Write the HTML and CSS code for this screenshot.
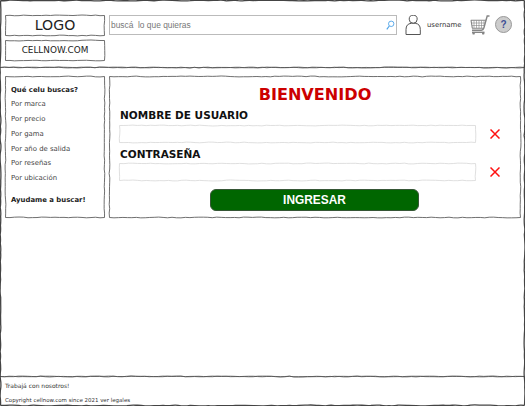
FILE: index.html
```html
<!DOCTYPE html>
<html lang="es">
<head>
<meta charset="utf-8">
<title>CELLNOW.COM</title>
<link rel="stylesheet" href="styles.css">
</head>
<body>
<div class="page sketch heavy">
  <header class="header">
    <div class="brand">
      <div class="logo sketch">LOGO</div>
      <div class="domain sketch">CELLNOW.COM</div>
    </div>
    <div class="search">
      <span>buscá&nbsp; lo que quieras</span>
      <svg width="9" height="11" viewBox="0 0 9 11" fill="none" stroke="#4da3e8"><circle cx="5.2" cy="3.8" r="2.7" stroke-width=".9"/><path d="M3.3 6 .8 9.3" stroke-width="1.2"/></svg>
    </div>
    <svg class="user" width="18" height="22" viewBox="0 0 18 22" fill="#fff" stroke="#555" stroke-width="1"><path d="M1 19.5V14.5Q1 8.8 6.3 8.3H10.2Q15.3 8.8 15.3 14.5V19.5Z"/><circle cx="8.2" cy="4.2" r="4"/></svg>
    <span class="username">username</span>
    <svg class="cart" width="21" height="21" viewBox="0 0 21 21" fill="none" stroke="#858585"><path d="M19.5 1H17.2L13.8 13.2Q13.3 15.2 11.3 15.2H2" stroke-width="1.4"/><path d="M.8 5.2H16M2 13.2H13.8M1 5.2 2.3 13.2" stroke-width="1.1"/><path d="M1.5 8H15M2 10.5H14M4 5.5V13M6.5 5.5V13M9 5.5V13M11.5 5.5V13M14 5.5V11" stroke-width=".6"/><path d="M2 17.3H14.5" stroke-width="1.4"/><circle cx="3.6" cy="18.4" r="1.2" fill="#858585" stroke="none"/><circle cx="13.2" cy="18.4" r="1.2" fill="#858585" stroke="none"/></svg>
    <span class="help">?</span>
  </header>
  <div class="rule sketch-line"></div>
  <div class="content">
    <nav class="sidebar sketch">
      <b>Qué celu buscas?</b>
      <span>Por marca</span>
      <span>Por precio</span>
      <span>Por gama</span>
      <span>Por año de salida</span>
      <span>Por reseñas</span>
      <span>Por ubicación</span>
      <b class="assist">Ayudame a buscar!</b>
    </nav>
    <main class="login sketch">
      <h1>BIENVENIDO</h1>
      <label>NOMBRE DE USUARIO</label>
      <div class="field"><div class="input sketch light"></div><svg class="cross" width="10" height="10" viewBox="0 0 10 10"><path d="M.5.5 9.5 9.5M9.5.5.5 9.5" stroke="#f11" stroke-width="1.5"/></svg></div>
      <label class="second">CONTRASEÑA</label>
      <div class="field"><div class="input sketch light"></div><svg class="cross" width="10" height="10" viewBox="0 0 10 10"><path d="M.5.5 9.5 9.5M9.5.5.5 9.5" stroke="#f11" stroke-width="1.5"/></svg></div>
      <div class="submit">INGRESAR</div>
    </main>
  </div>
  <footer class="footer">
    <div class="sketch-line"></div>
    <span class="jobs">Trabajá con nosotros!</span>
    <span class="legal">Copyright cellnow.com since 2021 ver legales</span>
  </footer>
</div>
<script src="sketch.js"></script>
</body>
</html>
```
FILE: styles.css
```css
* { box-sizing: border-box; }
body { margin: 0; background: #fff; color: #222; font-family: "DejaVu Sans", sans-serif; }
.page { width: 525px; height: 406px; display: flex; flex-direction: column; overflow: hidden; }
.sketch, .sketch-line { position: relative; }
.outline { position: absolute; left: 0; top: 0; overflow: visible; pointer-events: none; fill: none; stroke: #555; stroke-width: .85; }
.light > .outline { stroke: #d9d9d9; }
.heavy > .outline { stroke: #444; stroke-width: 1.3; }
.header { height: 67px; flex: none; display: flex; align-items: flex-start; padding: 15px 0 0 5px; }
.brand { display: flex; flex-direction: column; gap: 4px; width: 100px; }
.logo, .domain { height: 20.5px; display: flex; align-items: center; justify-content: center; }
.logo { font-size: 14.1px; padding-bottom: 1px; }
.domain { font-size: 8.9px; }
.search { margin-left: 4px; width: 288px; height: 20px; border: 1px solid #bbb; display: flex; align-items: center; justify-content: space-between; padding: 0 1px; font: 8.4px "Liberation Sans", sans-serif; color: #777; }
.user { margin-left: 8px; }
.username { margin: 5px 0 0 4px; width: 43px; font-size: 6.9px; line-height: 10px; color: #333; }
.cart { flex: none; }
.help { width: 17px; height: 17px; margin: 1px 0 0 4px; border: 1px solid #999; border-radius: 50%; background: #ccc; color: #3c4e94; font: bold 10px/15px "Liberation Sans", sans-serif; text-align: center; }
.rule { height: 1px; flex: none; }
.content { display: flex; gap: 4px; padding: 8px 4px 0 5px; }
.sidebar { width: 100px; height: 142px; padding: 6.5px 6px; display: flex; flex-direction: column; font-size: 6.9px; line-height: 14.8px; color: #444; white-space: nowrap; }
.sidebar b { color: #222; }
.sidebar .assist { margin-top: 7px; }
.login { width: 412px; height: 142px; padding: 9px 10px 0; display: flex; flex-direction: column; }
h1 { margin: 0; font-size: 16.1px; line-height: 20px; color: #c00; text-align: center; }
label { margin: 3px 0 0 1px; height: 17px; font-size: 10.5px; line-height: 15px; font-weight: bold; color: #111; }
.second { margin-top: 4px; height: 16px; }
.field { display: flex; align-items: center; }
.input { width: 357px; height: 18px; }
.cross { margin-left: 14px; }
.submit { width: 209px; height: 22px; margin: 8px 0 0 91px; border: 1px solid #365636; border-radius: 6px; background: #060; color: #fff; font: bold 11.9px/20px "Liberation Sans", sans-serif; text-align: center; }
.footer { margin-top: auto; height: 30px; display: flex; flex-direction: column; font-size: 6px; line-height: 10px; color: #333; }
.footer span { margin-left: 5px; white-space: nowrap; }
.jobs { margin-top: 5px; }
.footer .legal { margin-top: 4px; font-size: 5.46px; }
```
FILE: sketch.js
```js
// Draws hand-drawn looking outlines around boxes and along rules.
let seed = 7;
const rnd = () => { seed = (seed * 16807) % 2147483647; return seed / 2147483647 - 0.5; };

function stroke(x1, y1, x2, y2) {
  const len = Math.hypot(x2 - x1, y2 - y1);
  const n = Math.max(2, Math.round(len / 9));
  let d = `M${x1} ${y1}`;
  for (let i = 1; i <= n; i++) {
    const t = i / n, m = (i - 0.5) / n;
    const a = i === n ? 0 : rnd() * 0.8, b = rnd() * 1.5;
    const h = y1 === y2;
    const at = (k, o) => `${x1 + (x2 - x1) * k + (h ? 0 : o)} ${y1 + (y2 - y1) * k + (h ? o : 0)}`;
    d += `Q${at(m, b)} ${at(t, a)}`;
  }
  return d;
}

document.querySelectorAll('.sketch, .sketch-line').forEach(el => {
  const w = el.offsetWidth - 0.5, h = el.offsetHeight - 0.5;
  const svg = document.createElementNS('http://www.w3.org/2000/svg', 'svg');
  const path = document.createElementNS('http://www.w3.org/2000/svg', 'path');
  svg.setAttribute('class', 'outline');
  svg.setAttribute('width', el.offsetWidth);
  svg.setAttribute('height', Math.max(1, el.offsetHeight));
  path.setAttribute('d', el.classList.contains('sketch-line')
    ? stroke(0, 0.5, w, 0.5) + stroke(0, 0.5, w, 0.5)
    : stroke(0.5, 0.5, w, 0.5) + stroke(w, 0.5, w, h) + stroke(w, h, 0.5, h) + stroke(0.5, h, 0.5, 0.5));
  svg.append(path);
  el.append(svg);
});
```
